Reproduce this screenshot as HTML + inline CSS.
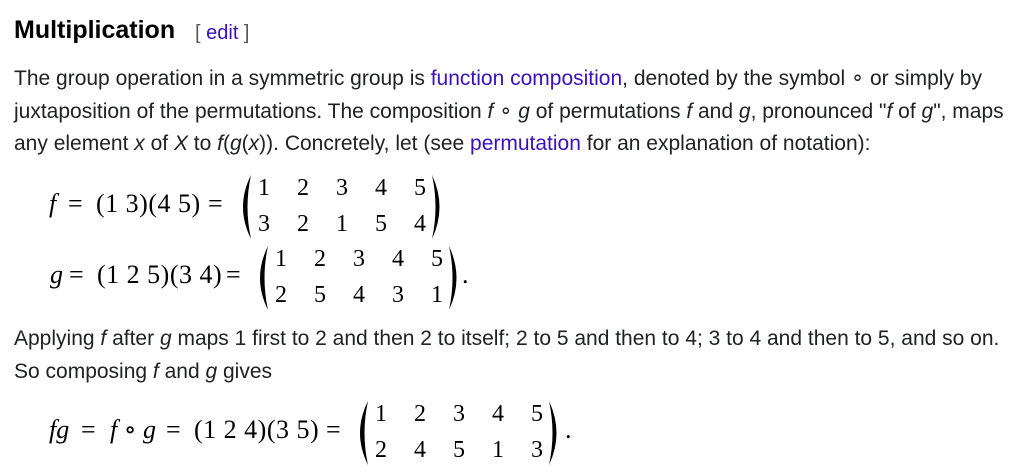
<!DOCTYPE html>
<html><head><meta charset="utf-8"><style>
body{margin:0;width:1017px;height:476px;background:#fff;position:relative;overflow:hidden;font-family:"Liberation Sans",sans-serif;color:#202122}
.a{position:absolute;white-space:nowrap}
h2{position:absolute;left:14px;top:16px;margin:0;font-size:25px;font-weight:bold;color:#000}
.ed{position:absolute;left:195px;top:22px;font-size:20px;color:#54595d}
a{color:#3a10bf;text-decoration:none}
.p{font-size:21px;left:14px}
.m{font-family:"Liberation Serif","DejaVu Serif",serif;font-size:26px;color:#000;position:absolute;white-space:nowrap}
.c{letter-spacing:0.5px}
.i{font-style:italic}
.d{font-family:"Liberation Serif",serif;font-size:24px;color:#000;position:absolute;white-space:nowrap;word-spacing:21px}
svg{position:absolute}
</style></head><body>
<h2>Multiplication</h2>
<div class="ed">[ <a>edit</a> ]</div>
<div class="a p" style="top:66px">The group operation in a symmetric group is <a>function composition</a>, denoted by the symbol ∘ or simply by</div>
<div class="a p" style="top:99px">juxtaposition of the permutations. The composition <i>f</i> ∘ <i>g</i> of permutations <i>f</i> and <i>g</i>, pronounced "<i>f</i> of <i>g</i>", maps</div>
<div class="a p" style="top:132px">any element <i>x</i> of <i>X</i> to <i>f</i>(<i>g</i>(<i>x</i>)). Concretely, let (see <a>permutation</a> for an explanation of notation):</div>

<div class="m i" style="left:49px;top:189px">f</div>
<div class="m" style="left:68px;top:189px">=</div>
<div class="m c" style="left:96px;top:189px">(1 3)(4 5)</div>
<div class="m" style="left:208px;top:189px">=</div>
<svg style="left:238px;top:175px" width="16" height="64"><path d="M13,0 Q-3,32 13,64 Q6,32 13,0Z" fill="#000"/></svg>
<svg style="left:430px;top:175px" width="16" height="64"><path d="M2,0 Q17,32 2,64 Q9,32 2,0Z" fill="#000"/></svg>
<div class="d" style="left:258px;top:175px">1 2 3 4 5</div>
<div class="d" style="left:258px;top:211px">3 2 1 5 4</div>

<div class="m i" style="left:50px;top:260px">g</div>
<div class="m" style="left:69px;top:260px">=</div>
<div class="m c" style="left:97px;top:260px">(1 2 5)(3 4)</div>
<div class="m" style="left:226px;top:260px">=</div>
<svg style="left:255px;top:246px" width="16" height="64"><path d="M13,0 Q-3,32 13,64 Q6,32 13,0Z" fill="#000"/></svg>
<svg style="left:447px;top:246px" width="16" height="64"><path d="M2,0 Q17,32 2,64 Q9,32 2,0Z" fill="#000"/></svg>
<div class="m" style="left:462px;top:260px">.</div>
<div class="d" style="left:275px;top:246px">1 2 3 4 5</div>
<div class="d" style="left:275px;top:282px">2 5 4 3 1</div>

<div class="a p" style="top:327px">Applying <i>f</i> after <i>g</i> maps 1 first to 2 and then 2 to itself; 2 to 5 and then to 4; 3 to 4 and then to 5, and so on.</div>
<div class="a p" style="top:360px">So composing <i>f</i> and <i>g</i> gives</div>

<div class="m i" style="left:49px;top:415px">fg</div>
<div class="m" style="left:81px;top:415px">=</div>
<div class="m" style="left:110px;top:415px"><span class="i">f</span> ∘ <span class="i">g</span></div>
<div class="m" style="left:166px;top:415px">=</div>
<div class="m c" style="left:194px;top:415px">(1 2 4)(3 5)</div>
<div class="m" style="left:326px;top:415px">=</div>
<svg style="left:355px;top:401px" width="16" height="64"><path d="M13,0 Q-3,32 13,64 Q6,32 13,0Z" fill="#000"/></svg>
<svg style="left:547px;top:401px" width="16" height="64"><path d="M2,0 Q17,32 2,64 Q9,32 2,0Z" fill="#000"/></svg>
<div class="m" style="left:565px;top:415px">.</div>
<div class="d" style="left:375px;top:401px">1 2 3 4 5</div>
<div class="d" style="left:375px;top:437px">2 4 5 1 3</div>
</body></html>
